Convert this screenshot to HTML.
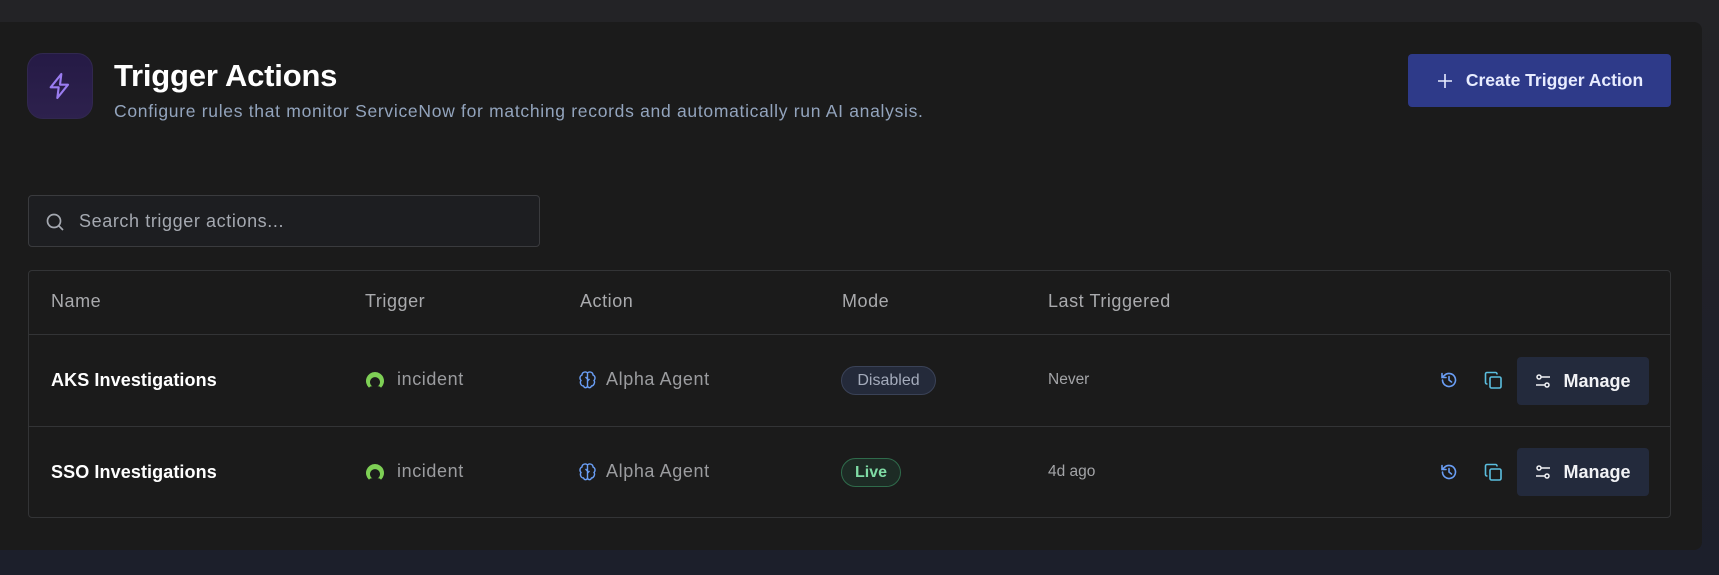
<!DOCTYPE html>
<html><head><style>
*{margin:0;padding:0;box-sizing:border-box}
body{width:1719px;height:575px;background:linear-gradient(180deg,#232326 0%,#1f2029 60%,#1c1f2b 100%);font-family:"Liberation Sans",sans-serif;position:relative;overflow:hidden}
.card{position:absolute;left:0;top:22px;width:1702px;height:528px;background:#1b1b1b;border-radius:0 8px 8px 0}
.a{position:absolute}
.icobox{left:27px;top:53px;width:66px;height:66px;border-radius:16px;background:linear-gradient(180deg,#251a45,#2d214d);border:1px solid #31284f;display:flex;align-items:center;justify-content:center}
.title{left:114px;top:58px;font-size:31px;font-weight:bold;color:#fff;letter-spacing:-0.2px}
.sub{left:114px;top:101px;font-size:17.5px;color:#93a4bd;letter-spacing:0.7px}
.btn{left:1408px;top:54px;width:263px;height:53px;background:#2e3a89;border-radius:4px;color:#e8ecff;font-size:17.5px;font-weight:bold;display:flex;align-items:center;justify-content:center;gap:12px}
.search{left:28px;top:195px;width:512px;height:52px;border:1px solid #3a3b3e;border-radius:4px;background:#1d1e21}
.search span{position:absolute;left:50px;top:15px;font-size:18px;color:#a5a9b1;letter-spacing:0.6px}
.table{left:28px;top:270px;width:1643px;height:248px;border:1px solid #333436;border-radius:4px}
.hl{position:absolute;left:0;right:0;height:1px;background:#333436}
.th{top:291px;font-size:18px;color:#a9aaad;letter-spacing:0.55px}
.name{font-size:18px;font-weight:bold;color:#fff;letter-spacing:0.1px}
.cell{font-size:18px;color:#9b9c9f;letter-spacing:0.6px}
.small{font-size:15.5px;color:#a3a4a7}
.badge{height:29px;border-radius:15px;font-size:16px;display:flex;align-items:center;justify-content:center}
.dis{width:95px;background:#242a3a;border:1px solid #3a4257;color:#a4abbb}
.live{width:60px;background:#1d2b25;border:1px solid #2f6b4b;color:#7fdca5;font-weight:bold}
.mg{width:132px;height:48px;background:#232a3c;border-radius:4px;color:#f1f2f5;font-size:18px;font-weight:bold;display:flex;align-items:center;justify-content:center;gap:12px}
</style></head><body>
<div class="card"></div>
<div class="a icobox"><svg width="32" height="32" viewBox="0 0 24 24" fill="none" stroke="#9a7cf0" stroke-width="1.6" stroke-linejoin="round" stroke-linecap="round"><path d="M13 3 5 13h6l-1 8 8-10h-6l1-8z"/></svg></div>
<div class="a title">Trigger Actions</div>
<div class="a sub">Configure rules that monitor ServiceNow for matching records and automatically run AI analysis.</div>
<div class="a btn"><svg width="18" height="18" viewBox="0 0 18 18" stroke="#e8ecff" stroke-width="1.6"><path d="M9 2v14M2 9h14"/></svg>Create Trigger Action</div>
<div class="a search"><svg class="a" style="left:16px;top:16px" width="20" height="20" viewBox="0 0 20 20" fill="none" stroke="#a5a9b1" stroke-width="1.7"><circle cx="9" cy="9" r="6.5"/><path d="M14 14l4 4"/></svg><span>Search trigger actions...</span></div>
<div class="a table">
<div class="hl" style="top:63px"></div>
<div class="hl" style="top:155px"></div>
</div>
<div class="a th" style="left:51px">Name</div>
<div class="a th" style="left:365px">Trigger</div>
<div class="a th" style="left:580px">Action</div>
<div class="a th" style="left:842px">Mode</div>
<div class="a th" style="left:1048px">Last Triggered</div>

<div class="a name" style="left:51px;top:370px">AKS Investigations</div>
<svg class="a" style="left:365px;top:371px" width="20" height="20" viewBox="0 0 20 20"><path d="M10 1a9 9 0 0 0-6 15.7 3 3 0 0 1 4-1 5 5 0 1 1 4 0 3 3 0 0 1 4 1A9 9 0 0 0 10 1z" fill="#7ed055"/></svg>
<div class="a cell" style="left:397px;top:369px">incident</div>
<svg class="a" style="left:578px;top:370px" width="19" height="20" viewBox="0 0 19 20" fill="none" stroke="#6a9ef5" stroke-width="1.4"><path d="M9.5 3C8 1 4 2 4 5 1.5 6 1.5 9 3 10.5 1.5 12.5 3 16 5.5 16c1 2.5 4 2 4-.5M9.5 3c1.5-2 5.5-1 5.5 2 2.5 1 2.5 4 1 5.5 1.5 2-.5 5.5-2.5 5.5-1 2.5-4 2-4-.5V3"/><path d="M9.5 9l-2-2M9.5 11l2-2"/></svg>
<div class="a cell" style="left:606px;top:369px">Alpha Agent</div>
<div class="a badge dis" style="left:841px;top:366px">Disabled</div>
<div class="a small" style="left:1048px;top:371px">Never</div>

<div class="a name" style="left:51px;top:462px">SSO Investigations</div>
<svg class="a" style="left:365px;top:463px" width="20" height="20" viewBox="0 0 20 20"><path d="M10 1a9 9 0 0 0-6 15.7 3 3 0 0 1 4-1 5 5 0 1 1 4 0 3 3 0 0 1 4 1A9 9 0 0 0 10 1z" fill="#7ed055"/></svg>
<div class="a cell" style="left:397px;top:461px">incident</div>
<svg class="a" style="left:578px;top:462px" width="19" height="20" viewBox="0 0 19 20" fill="none" stroke="#6a9ef5" stroke-width="1.4"><path d="M9.5 3C8 1 4 2 4 5 1.5 6 1.5 9 3 10.5 1.5 12.5 3 16 5.5 16c1 2.5 4 2 4-.5M9.5 3c1.5-2 5.5-1 5.5 2 2.5 1 2.5 4 1 5.5 1.5 2-.5 5.5-2.5 5.5-1 2.5-4 2-4-.5V3"/><path d="M9.5 9l-2-2M9.5 11l2-2"/></svg>
<div class="a cell" style="left:606px;top:461px">Alpha Agent</div>
<div class="a badge live" style="left:841px;top:458px">Live</div>
<div class="a small" style="left:1048px;top:463px">4d ago</div>

<svg class="a" style="left:1440px;top:371px" width="18" height="18" viewBox="0 0 18 18" fill="none" stroke="#6a9ef5" stroke-width="1.6" stroke-linecap="round"><path d="M2.5 9a6.5 6.5 0 1 0 2-4.7L2 6.5M2 2.5v4h4"/><path d="M9 5.5V9l2.5 2"/></svg>
<svg class="a" style="left:1484px;top:371px" width="19" height="19" viewBox="0 0 19 19" fill="none" stroke="#5bbfdf" stroke-width="1.6"><rect x="6" y="6" width="11" height="11" rx="1.5"/><path d="M3.5 13H3a1.5 1.5 0 0 1-1.5-1.5V3A1.5 1.5 0 0 1 3 1.5h8.5A1.5 1.5 0 0 1 13 3v.5"/></svg>
<div class="a mg" style="left:1517px;top:357px"><svg width="16" height="16" viewBox="0 0 16 16" fill="none" stroke="#f1f2f5" stroke-width="1.5"><circle cx="4" cy="4" r="2"/><circle cx="12" cy="12" r="2"/><path d="M6 4h9M1 12h9"/></svg>Manage</div>
<svg class="a" style="left:1440px;top:463px" width="18" height="18" viewBox="0 0 18 18" fill="none" stroke="#6a9ef5" stroke-width="1.6" stroke-linecap="round"><path d="M2.5 9a6.5 6.5 0 1 0 2-4.7L2 6.5M2 2.5v4h4"/><path d="M9 5.5V9l2.5 2"/></svg>
<svg class="a" style="left:1484px;top:463px" width="19" height="19" viewBox="0 0 19 19" fill="none" stroke="#5bbfdf" stroke-width="1.6"><rect x="6" y="6" width="11" height="11" rx="1.5"/><path d="M3.5 13H3a1.5 1.5 0 0 1-1.5-1.5V3A1.5 1.5 0 0 1 3 1.5h8.5A1.5 1.5 0 0 1 13 3v.5"/></svg>
<div class="a mg" style="left:1517px;top:448px"><svg width="16" height="16" viewBox="0 0 16 16" fill="none" stroke="#f1f2f5" stroke-width="1.5"><circle cx="4" cy="4" r="2"/><circle cx="12" cy="12" r="2"/><path d="M6 4h9M1 12h9"/></svg>Manage</div>
</body></html>
